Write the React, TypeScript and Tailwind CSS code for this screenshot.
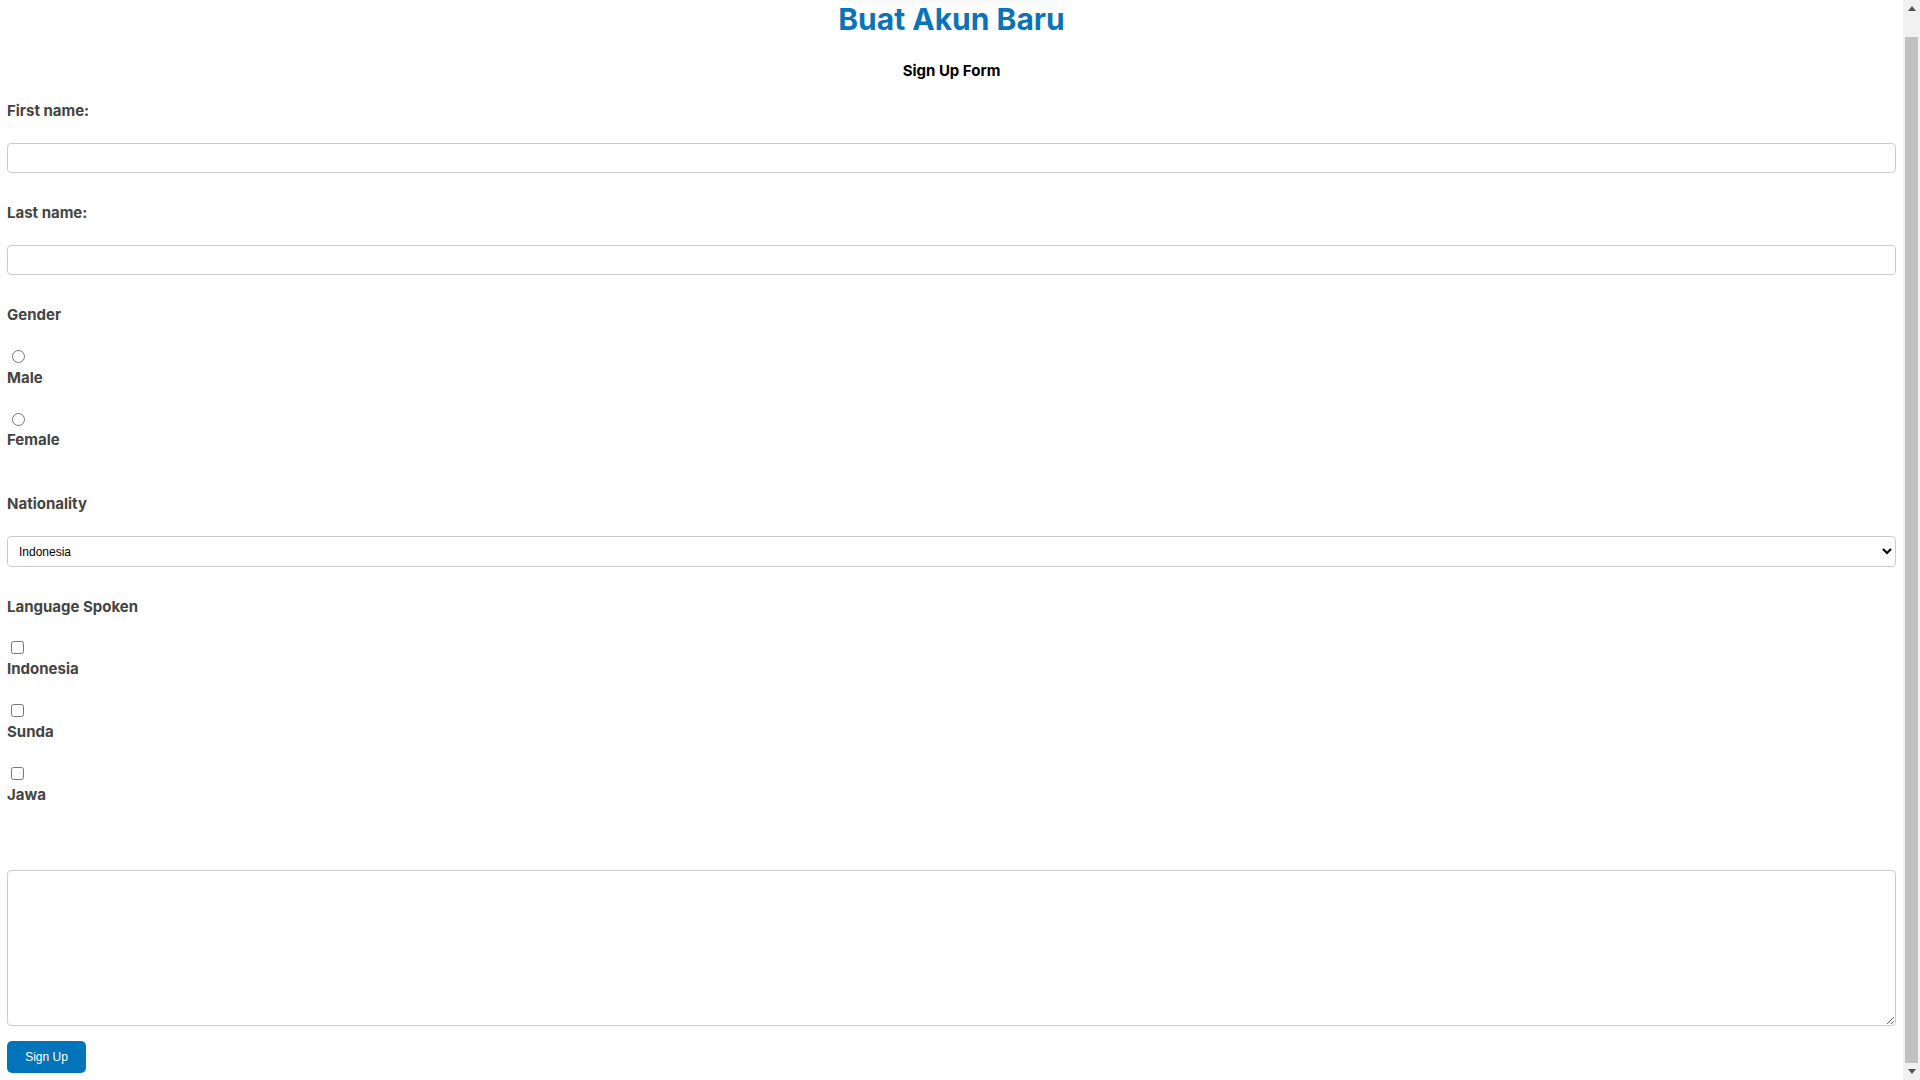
import React from 'react';

const labelCls = "block h-[20px] leading-[20px] text-[15px] font-bold text-[#444]";
const boxCls = "block w-full rounded-[4px] border border-[#ccc] bg-white outline-none";

function Scrollbar() {
  return (
    <div className="flex h-full w-[17px] shrink-0 flex-col bg-[#f1f1f1]">
      <div className="flex h-[17px] items-center justify-center">
        <svg width="8" height="5" viewBox="0 0 8 5"><polygon points="4,0 8,5 0,5" fill="#505050" /></svg>
      </div>
      <div className="flex-1 px-[2px] pt-[20px]">
        <div className="h-full w-full bg-[#c1c1c1]" />
      </div>
      <div className="flex h-[17px] items-center justify-center">
        <svg width="8" height="5" viewBox="0 0 8 5"><polygon points="0,0 8,0 4,5" fill="#505050" /></svg>
      </div>
    </div>
  );
}

export default function App() {
  return (
    <div className="flex h-[1080px] w-full overflow-hidden bg-white font-['Inter',sans-serif]">
      <div className="min-w-0 flex-1 px-[7px] pt-[1px]">
        {/* edge of the shadow from the header box scrolled out above */}
        <div className="mx-auto -mt-[1px] mb-[1px] h-0 w-[210px] shadow-[0_0_8px_2px_rgba(0,0,0,0.07)]" />

        <h1 className="h-[36px] text-center text-[30px] leading-[36px] font-bold text-[#0b74b9]">Buat Akun Baru</h1>
        <h2 className="mt-[24px] h-[20px] text-center text-[15px] leading-[20px] font-bold text-black">Sign Up Form</h2>

        <form onSubmit={(e) => e.preventDefault()}>
          <label htmlFor="first" className={`mt-[20px] ${labelCls}`}>First name:</label>
          <input id="first" type="text" className={`mt-[22px] h-[30px] px-[10px] text-[12px] ${boxCls}`} />

          <label htmlFor="last" className={`mt-[30px] ${labelCls}`}>Last name:</label>
          <input id="last" type="text" className={`mt-[22px] h-[30px] px-[10px] text-[12px] ${boxCls}`} />

          <p className={`mt-[30px] ${labelCls}`}>Gender</p>
          <input type="radio" name="gender" id="male" className="mt-[25px] ml-[5px] block h-[13px] w-[13px]" />
          <label htmlFor="male" className={`mt-[5px] ${labelCls}`}>Male</label>
          <input type="radio" name="gender" id="female" className="mt-[25px] ml-[5px] block h-[13px] w-[13px]" />
          <label htmlFor="female" className={`mt-[4px] ${labelCls}`}>Female</label>

          <label htmlFor="nat" className={`mt-[44px] ${labelCls}`}>Nationality</label>
          <select id="nat" defaultValue="Indonesia" className={`mt-[22px] h-[31px] pl-[7px] text-[12px] text-black font-['Liberation_Sans',Arial,sans-serif] ${boxCls}`}>
            <option>Indonesia</option>
            <option>Malaysia</option>
            <option>Singapore</option>
          </select>

          <p className={`mt-[30px] ${labelCls}`}>Language Spoken</p>
          <input type="checkbox" id="l1" className="mt-[24px] ml-[4px] block h-[13px] w-[13px]" />
          <label htmlFor="l1" className={`mt-[5px] ${labelCls}`}>Indonesia</label>
          <input type="checkbox" id="l2" className="mt-[25px] ml-[4px] block h-[13px] w-[13px]" />
          <label htmlFor="l2" className={`mt-[5px] ${labelCls}`}>Sunda</label>
          <input type="checkbox" id="l3" className="mt-[25px] ml-[4px] block h-[13px] w-[13px]" />
          <label htmlFor="l3" className={`mt-[5px] ${labelCls}`}>Jawa</label>

          <textarea className={`mt-[65px] h-[156px] resize p-[8px] text-[12px] ${boxCls}`} />

          <button type="submit" className="mt-[15px] block h-[32px] w-[79px] rounded-[5px] bg-[#0274b9] text-center text-[12px] text-white font-['Liberation_Sans',Arial,sans-serif]">Sign Up</button>
        </form>
      </div>
      <Scrollbar />
    </div>
  );
}
